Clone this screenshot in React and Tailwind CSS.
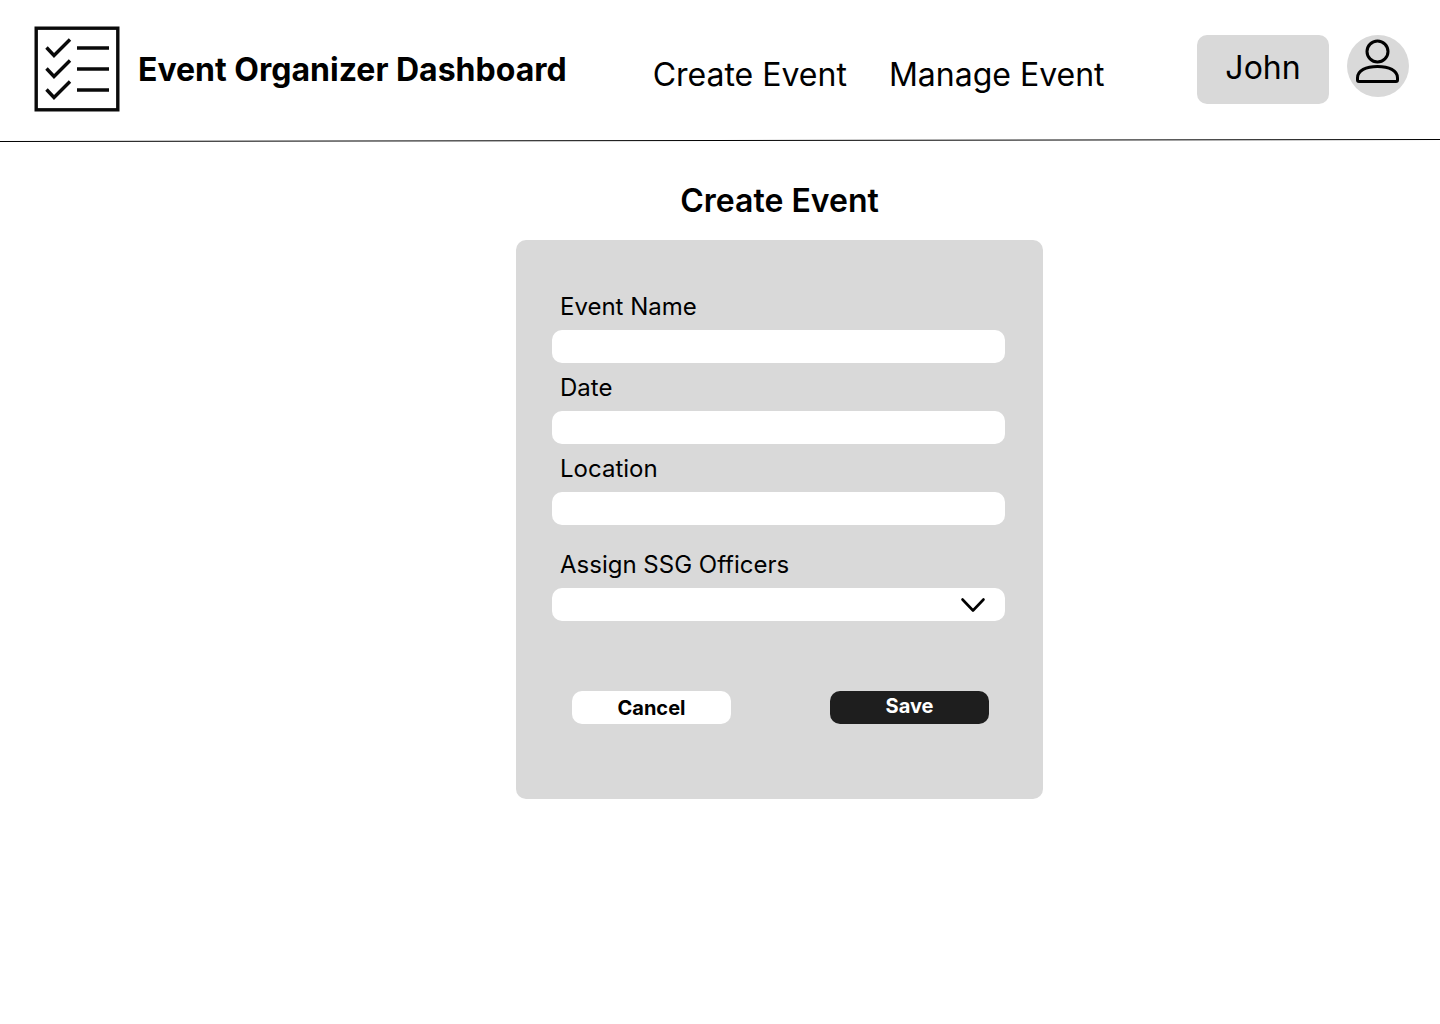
function ChecklistLogo() {
  return (
    <svg viewBox="0 0 86 86" className="size-[86px] shrink-0" fill="none" stroke="#0a0a0a" role="img" aria-label="Checklist">
      <rect x="2.2" y="2.2" width="81.600" height="81.600" strokeWidth="3.4" />
      <g strokeWidth="3.4">
        <path d="M12.500 21.500 L20 29.500 L36 13.500" />
        <path d="M12.500 42.500 L20 50.500 L36 34.500" />
        <path d="M12.500 63.500 L20 71.500 L36 55.500" />
        <path d="M43 22H75M43 43H75M43 64H75" />
      </g>
    </svg>
  );
}

function PersonIcon() {
  return (
    <svg viewBox="0 0 62 62" className="size-full" fill="none" stroke="#000" strokeWidth="3" strokeLinejoin="round" aria-hidden="true">
      <circle cx="30.5" cy="16.5" r="10.500" />
      <path d="M10.5 43C10.5 35.500 19 31.500 30.500 31.500C42 31.500 50.500 35.500 50.500 43V45Q50.500 46.500 49 46.500H12Q10.500 46.500 10.500 45Z" />
    </svg>
  );
}

function Field({ id, label, children }) {
  return (
    <div className="flex flex-col gap-2">
      <label htmlFor={id} className="px-2 text-2xl leading-[30px]">
        {label}
      </label>
      {children}
    </div>
  );
}

const control = "h-[33px] w-full rounded-[10px] bg-white px-3 text-base";
const action = "h-[33px] w-[159px] rounded-[10px] text-xl font-bold";

export default function App() {
  return (
    <div className="min-h-screen bg-white font-['Inter',sans-serif] text-black">
      <header>
        <div className="flex items-center pt-[26px] pr-[31px] pb-[27px] pl-[34px]">
          <ChecklistLogo />
          <h1 className="ml-[18px] pt-0.5 text-[32px] leading-10 font-bold whitespace-nowrap">Event Organizer Dashboard</h1>
          <nav className="ml-[86px] flex gap-[42px] pt-[11px] text-[32px] leading-10 whitespace-nowrap">
            <a href="#create">Create Event</a>
            <a href="#manage">Manage Event</a>
          </nav>
          <div className="ml-auto flex items-start gap-[18px]">
            <button type="button" className="h-[69px] w-[132px] rounded-[10px] bg-[#d9d9d9] pb-0.5 text-[32px]">
              John
            </button>
            <button type="button" aria-label="Profile" className="size-[62px] rounded-full bg-[#d9d9d9]">
              <PersonIcon />
            </button>
          </div>
        </div>
        <svg viewBox="0 0 1440 3" preserveAspectRatio="none" className="block h-[3px] w-full" aria-hidden="true">
          <path d="M0 2.500L1440 0.500" stroke="#000" strokeWidth="1" />
        </svg>
      </header>

      <main className="flex flex-col items-center pt-[39px] pl-[119px]">
        <h2 className="text-[32px] leading-10 font-semibold">Create Event</h2>
        <form className="mt-[19px] w-full max-w-[527px] rounded-[10px] bg-[#d9d9d9] pt-[52px] pr-[38px] pb-[75px] pl-9">
          <div className="flex flex-col gap-[10px]">
            <Field id="name" label="Event Name">
              <input id="name" type="text" className={control} />
            </Field>
            <Field id="date" label="Date">
              <input id="date" type="text" className={control} />
            </Field>
            <Field id="location" label="Location">
              <input id="location" type="text" className={control} />
            </Field>
          </div>
          <div className="mt-[25px]">
            <Field id="officers" label="Assign SSG Officers">
              <div className="relative">
                <select id="officers" className={`${control} block appearance-none`} defaultValue="">
                  <option value=""></option>
                </select>
                <svg viewBox="0 0 26 16" className="pointer-events-none absolute top-[9px] right-[19px] h-4 w-[26px]" fill="none" stroke="#000" strokeWidth="2.6" strokeLinecap="round" strokeLinejoin="round" aria-hidden="true">
                  <path d="M2.500 2.500L13 13.500L23.500 2.500" />
                </svg>
              </div>
            </Field>
          </div>
          <div className="mt-[70px] flex justify-between pr-4 pl-5">
            <button type="button" className={`${action} bg-white`}>Cancel</button>
            <button type="submit" className={`${action} bg-[#1e1e1e] pb-[3px] text-white`}>Save</button>
          </div>
        </form>
      </main>
    </div>
  );
}
